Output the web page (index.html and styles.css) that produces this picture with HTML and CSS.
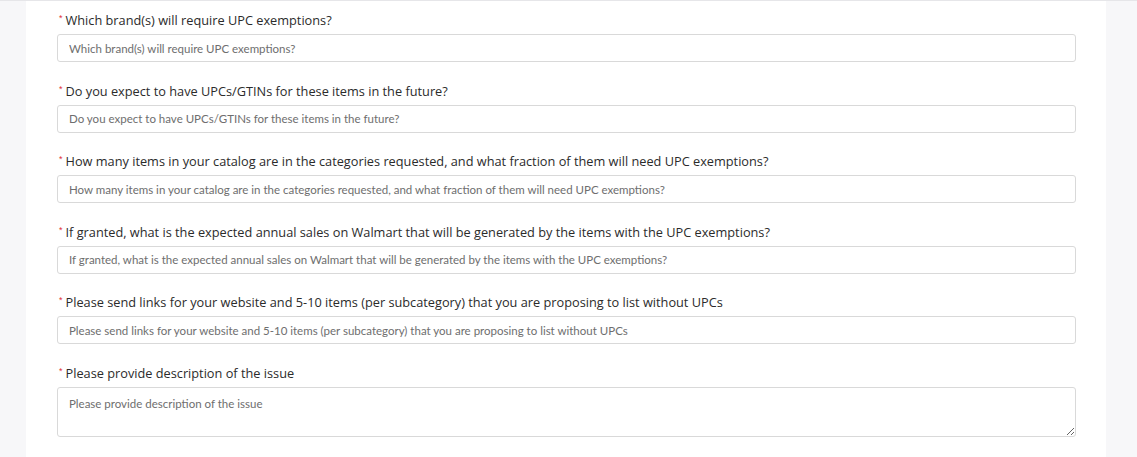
FILE: index.html
```html
<!DOCTYPE html>
<html>
<head>
<meta charset="utf-8">
<link rel="stylesheet" href="styles.css">
</head>
<body>
<div class="page">
  <div class="panel">
    <div class="field">
      <label class="label"><span class="req">*</span>Which brand(s) will require UPC exemptions?</label>
      <input class="input" type="text" placeholder="Which brand(s) will require UPC exemptions?">
    </div>
    <div class="field">
      <label class="label"><span class="req">*</span>Do you expect to have UPCs/GTINs for these items in the future?</label>
      <input class="input" type="text" placeholder="Do you expect to have UPCs/GTINs for these items in the future?">
    </div>
    <div class="field">
      <label class="label"><span class="req">*</span>How many items in your catalog are in the categories requested, and what fraction of them will need UPC exemptions?</label>
      <input class="input" type="text" placeholder="How many items in your catalog are in the categories requested, and what fraction of them will need UPC exemptions?">
    </div>
    <div class="field">
      <label class="label"><span class="req">*</span>If granted, what is the expected annual sales on Walmart that will be generated by the items with the UPC exemptions?</label>
      <input class="input" type="text" placeholder="If granted, what is the expected annual sales on Walmart that will be generated by the items with the UPC exemptions?">
    </div>
    <div class="field">
      <label class="label"><span class="req">*</span>Please send links for your website and 5-10 items (per subcategory) that you are proposing to list without UPCs</label>
      <input class="input" type="text" placeholder="Please send links for your website and 5-10 items (per subcategory) that you are proposing to list without UPCs">
    </div>
    <div class="field">
      <label class="label"><span class="req">*</span>Please provide description of the issue</label>
      <textarea class="input area" placeholder="Please provide description of the issue"></textarea>
    </div>
  </div>
</div>
</body>
</html>
```

FILE: styles.css
```css
html, body {
  margin: 0;
  padding: 0;
  height: 100%;
  overflow: hidden;
}
body {
  background: #f7f7f9;
  font-family: "Open Sans", "Noto Sans", sans-serif;
}
.page {
  height: 100%;
  padding: 0 31px 0 26px;
  border-top: 1px solid #e6e6e9;
  box-sizing: border-box;
}
.panel {
  background: #ffffff;
  height: 100%;
  padding: 10px 30px 0 31px;
  box-sizing: border-box;
}
.field {
  margin-bottom: 19.5px;
}
.label {
  display: block;
  font-size: 12.75px;
  line-height: 18px;
  color: #2b2b2b;
  margin-bottom: 5px;
  padding-left: 2px;
}
.req {
  color: #e0303a;
  font-size: 9px;
  line-height: 0;
  vertical-align: 4px;
  margin-right: 3px;
  font-family: "Liberation Sans", sans-serif;
}
.input {
  display: block;
  width: 100%;
  height: 28px;
  box-sizing: border-box;
  border: 1px solid #d9d9d9;
  border-radius: 3px;
  padding: 0 11px;
  margin: 0;
  font-family: Lato, sans-serif;
  font-size: 11.5px;
  color: #333;
  background: #fff;
  outline: none;
}
.input::placeholder {
  color: #6e6e6e;
}
.area {
  height: 50px;
  padding-top: 9px;
  resize: vertical;
}
```
